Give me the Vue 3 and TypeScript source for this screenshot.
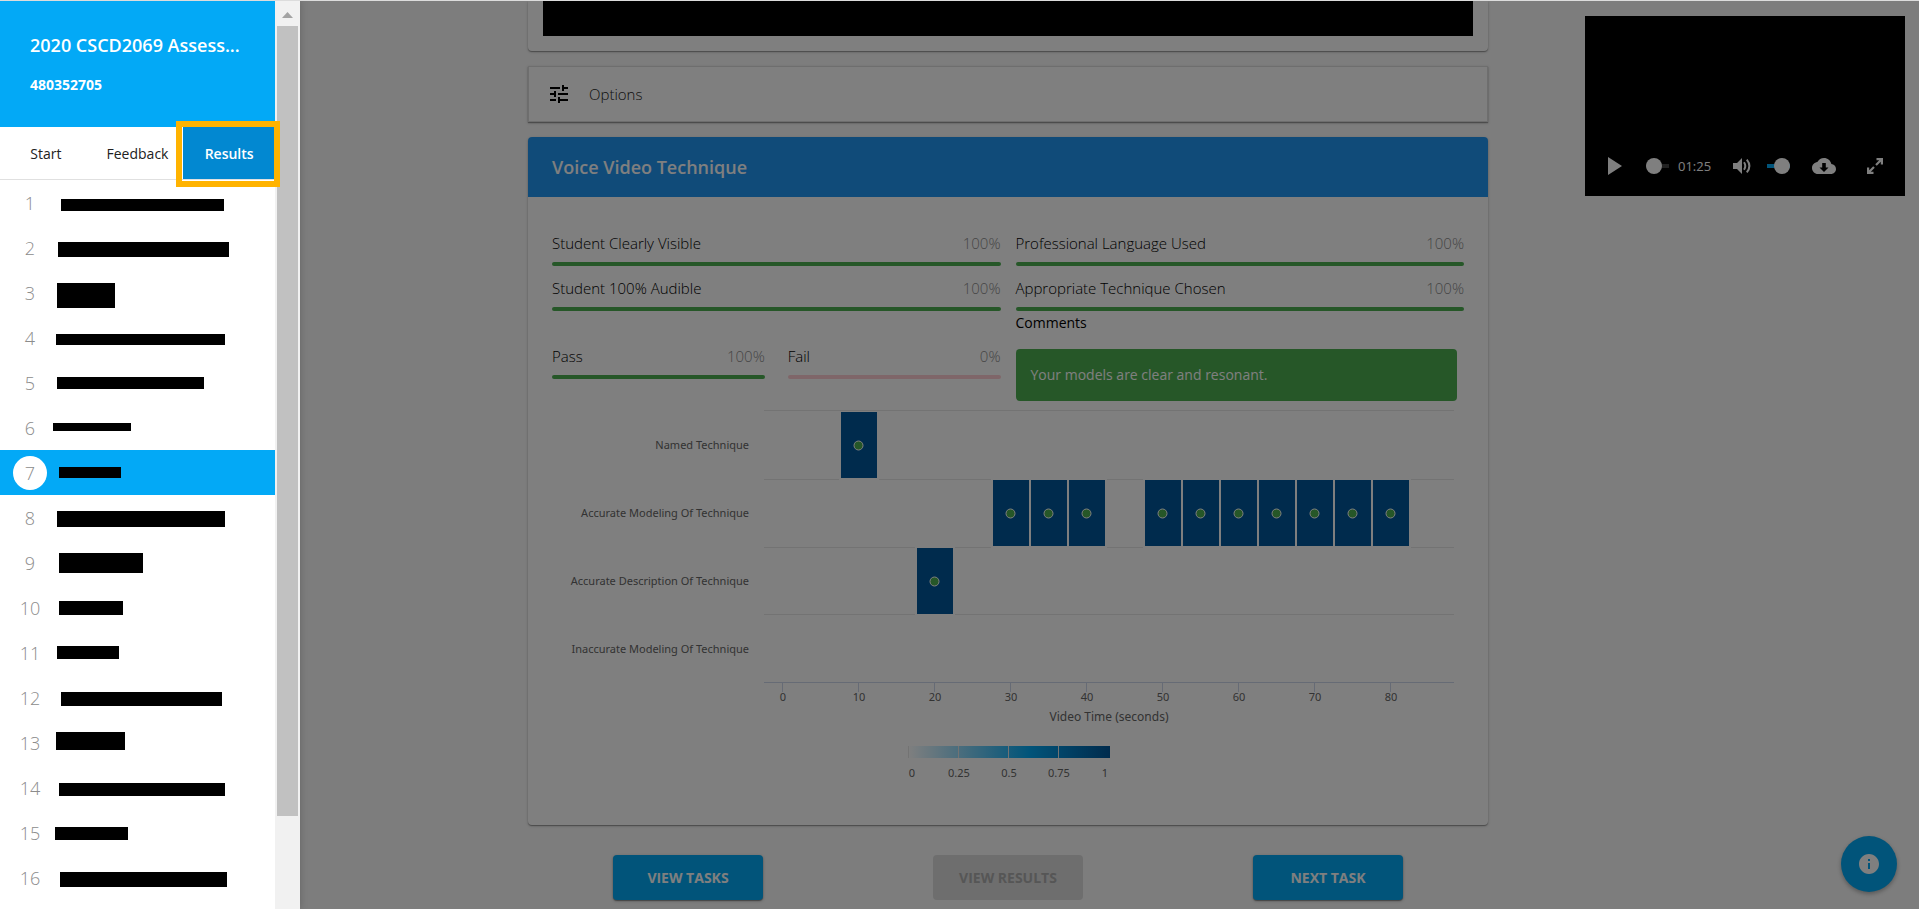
<script setup lang="ts">
import { ref } from 'vue'

interface Student { x: number; y: number; w: number; h: number }
interface Score { label: string; value: number; tone: 'good' | 'bad' }

const tabs = ['Start', 'Feedback', 'Results']
const activeTab = ref('Results')
const activeStudent = ref(6)

// Redaction box of each student name, relative to its list row
const students: Student[] = [
  { x: 61, y: 19, w: 163, h: 12 },
  { x: 58, y: 17, w: 171, h: 15 },
  { x: 57, y: 13, w: 58, h: 25 },
  { x: 56, y: 19, w: 169, h: 11 },
  { x: 57, y: 17, w: 147, h: 12 },
  { x: 53, y: 18, w: 78, h: 8 },
  { x: 59, y: 17, w: 62, h: 11 },
  { x: 57, y: 16, w: 168, h: 16 },
  { x: 59, y: 13, w: 84, h: 20 },
  { x: 59, y: 16, w: 64, h: 14 },
  { x: 57, y: 16, w: 62, h: 13 },
  { x: 61, y: 17, w: 161, h: 14 },
  { x: 56, y: 12, w: 69, h: 18 },
  { x: 59, y: 18, w: 166, h: 13 },
  { x: 55, y: 17, w: 73, h: 13 },
  { x: 60, y: 17, w: 167, h: 15 }
]

const leftScores: Score[] = [
  { label: 'Student Clearly Visible', value: 100, tone: 'good' },
  { label: 'Student 100% Audible', value: 100, tone: 'good' }
]
const rightScores: Score[] = [
  { label: 'Professional Language Used', value: 100, tone: 'good' },
  { label: 'Appropriate Technique Chosen', value: 100, tone: 'good' }
]
const verdicts: Score[] = [
  { label: 'Pass', value: 100, tone: 'good' },
  { label: 'Fail', value: 0, tone: 'bad' }
]

const categories = [
  { label: 'Named Technique', y: 11, times: [10] },
  { label: 'Accurate Modeling Of Technique', y: 79, times: [30, 35, 40, 50, 55, 60, 65, 70, 75, 80] },
  { label: 'Accurate Description Of Technique', y: 147, times: [20] },
  { label: 'Inaccurate Modeling Of Technique', y: 215, times: [] as number[] }
]
const gridLines = [9, 78, 146, 213]
const ticks = [0, 10, 20, 30, 40, 50, 60, 70, 80]
const timeX = (t: number): number => Math.round(230 + t * 7.6)
const legend = [
  { label: '0', x: 360 },
  { label: '0.25', x: 407 },
  { label: '0.5', x: 457 },
  { label: '0.75', x: 507 },
  { label: '1', x: 553 }
]
</script>

<template>
  <div class="page">
    <div class="content">
      <main class="main">
        <section class="card intro"><div class="intro-block"></div></section>

        <button class="options" type="button">
          <svg viewBox="0 0 24 24" width="24" height="24" aria-hidden="true">
            <path d="M3 17v2h6v-2H3zM3 5v2h10V5H3zm10 16v-2h8v-2h-8v-2h-2v6h2zM7 9v2H3v2h4v2h2V9H7zm14 4v-2H11v2h10zm-6-4h2V7h4V5h-4V3h-2v6z" />
          </svg>
          <span>Options</span>
        </button>

        <section class="card result">
          <h2 class="result-title">Voice Video Technique</h2>
          <div class="result-body">
            <div class="columns">
              <div>
                <div v-for="s in leftScores" :key="s.label" class="score">
                  <div class="score-text"><span>{{ s.label }}</span><span class="percent">{{ s.value }}%</span></div>
                  <div class="bar" :class="s.tone"><div class="fill" :style="{ width: s.value + '%' }"></div></div>
                </div>
                <div class="verdicts">
                  <div v-for="s in verdicts" :key="s.label" class="score">
                    <div class="score-text"><span>{{ s.label }}</span><span class="percent">{{ s.value }}%</span></div>
                    <div class="bar" :class="s.tone"><div class="fill" :style="{ width: s.value + '%' }"></div></div>
                  </div>
                </div>
              </div>
              <div>
                <div v-for="s in rightScores" :key="s.label" class="score">
                  <div class="score-text"><span>{{ s.label }}</span><span class="percent">{{ s.value }}%</span></div>
                  <div class="bar" :class="s.tone"><div class="fill" :style="{ width: s.value + '%' }"></div></div>
                </div>
                <h3 class="comments-title">Comments</h3>
                <p class="comment">Your models are clear and resonant.</p>
              </div>
            </div>

            <svg class="chart" viewBox="0 0 912 400" role="img" aria-label="Technique over video time">
              <defs>
                <linearGradient id="scale">
                  <stop offset="0" stop-color="#ffffff" />
                  <stop offset="0.6" stop-color="#03a9f4" />
                  <stop offset="1" stop-color="#01579b" />
                </linearGradient>
              </defs>
              <rect v-for="y in gridLines" :key="y" x="212" :y="y" width="690" height="1" fill="#e6e6e6" />
              <g v-for="c in categories" :key="c.label">
                <text class="label" x="197" :y="c.y + 37" text-anchor="end">{{ c.label }}</text>
                <template v-for="t in c.times" :key="t">
                  <rect :x="timeX(t) - 19" :y="c.y - 1" width="40" height="69" fill="#fff" />
                  <rect :x="timeX(t) - 17" :y="c.y" width="36" height="66" fill="#01579b" />
                  <circle :cx="timeX(t) + 0.5" :cy="c.y + 33.5" r="4.5" fill="#4caf50" stroke="#fff" />
                </template>
              </g>
              <rect x="212" y="281" width="690" height="1" fill="#ccd6eb" />
              <g v-for="t in ticks" :key="t">
                <rect :x="timeX(t)" y="282" width="1" height="9" fill="#ccd6eb" />
                <text class="label" :x="timeX(t) + 1" y="300" text-anchor="middle">{{ t }}</text>
              </g>
              <text class="axis-title" x="557" y="320" text-anchor="middle">Video Time (seconds)</text>
              <rect x="356" y="345" width="202" height="12" fill="url(#scale)" />
              <rect v-for="x in [356, 406, 456, 506]" :key="x" :x="x" y="345" width="1" height="12" fill="#e6e6e6" />
              <text v-for="l in legend" :key="l.label" class="label" :x="l.x" y="376" text-anchor="middle">{{ l.label }}</text>
            </svg>
          </div>
        </section>

        <div class="actions">
          <button type="button" class="action">VIEW TASKS</button>
          <button type="button" class="action" disabled>VIEW RESULTS</button>
          <button type="button" class="action">NEXT TASK</button>
        </div>
      </main>

      <aside class="video">
        <div class="controls">
          <button type="button" aria-label="Play">
            <svg viewBox="0 0 24 24"><path d="M5 3v18l14-9z" /></svg>
          </button>
          <input class="seek" type="range" min="0" max="100" value="0" aria-label="Position" />
          <span class="time">01:25</span>
          <button type="button" aria-label="Mute">
            <svg viewBox="0 0 24 24">
              <path d="M3 9v6h4l5 5V4L7 9z" />
              <path d="M14 8.2q2.600 3.800 0 7.600M16.800 5.600q5.200 6.400 0 12.800" fill="none" stroke="currentColor" stroke-width="2" />
            </svg>
          </button>
          <input class="volume" type="range" min="0" max="100" value="100" aria-label="Volume" />
          <button type="button" aria-label="Download">
            <svg viewBox="0 0 24 24"><path d="M19.350 10.040C18.670 6.590 15.640 4 12 4 9.110 4 6.600 5.640 5.350 8.040 2.340 8.360 0 10.910 0 14c0 3.310 2.690 6 6 6h13c2.760 0 5-2.240 5-5 0-2.640-2.050-4.780-4.650-4.960zM16.500 13.500L12 18l-4.500-4.500h2.700V9h3.600v4.500z" /></svg>
          </button>
          <button type="button" aria-label="Full screen">
            <svg viewBox="0 0 24 24" fill="none" stroke="currentColor" stroke-width="2.200"><path d="M13.500 5.100H18.900V10.500M18.500 5.500L13 11M10.500 18.900H5.100V13.500M5.500 18.500L11 13" fill="none" /></svg>
          </button>
        </div>
      </aside>
    </div>

    <button class="fab" type="button" aria-label="Information">
      <svg viewBox="0 0 24 24" width="24" height="24"><path d="M12 2C6.480 2 2 6.480 2 12s4.480 10 10 10 10-4.480 10-10S17.520 2 12 2zm1 15h-2v-6h2v6zm0-8h-2V7h2v2z" /></svg>
    </button>

    <div class="backdrop"></div>

    <nav class="drawer">
      <div class="drawer-main">
        <header class="drawer-head">
          <h1>2020 CSCD2069 Assess...</h1>
          <p>480352705</p>
        </header>
        <div class="tabs">
          <button v-for="t in tabs" :key="t" type="button" class="tab" :class="{ active: t === activeTab }" @click="activeTab = t">{{ t }}</button>
        </div>
        <ol class="students">
          <li v-for="(s, i) in students" :key="i" :class="{ active: i === activeStudent }" @click="activeStudent = i">
            <span class="number">{{ i + 1 }}</span>
            <span class="redaction" :style="{ left: s.x + 'px', top: s.y + 'px', width: s.w + 'px', height: s.h + 'px' }"></span>
          </li>
        </ol>
      </div>
      <div class="scrollbar">
        <svg viewBox="0 0 25 25" width="25" height="25"><path d="M7 17l5.500-6 5.500 6z" fill="#a3a3a3" /></svg>
        <div class="thumb"></div>
      </div>
    </nav>
  </div>
</template>

<style>
body {
  margin: 0;
}
</style>

<style scoped>
* {
  box-sizing: border-box;
}
.page {
  position: relative;
  height: 100vh;
  overflow: hidden;
  background: #fafafa;
  border-top: 1px solid #dcdcdc;
  font-family: "Open Sans", "Noto Sans", sans-serif;
  font-size: 14px;
  line-height: 24px;
  color: #212121;
}
h1, h2, h3, p, ol {
  margin: 0;
  padding: 0;
}
button {
  border: 0;
  padding: 0;
  font: inherit;
  color: inherit;
  background: none;
  cursor: pointer;
}
.content {
  display: grid;
  grid-template-columns: 1fr minmax(0, 960px) 1fr;
  padding-left: 97px;
}
.main {
  grid-column: 2;
}
.card {
  background: #fff;
  border-radius: 4px;
  box-shadow: 0 1px 3px rgba(0, 0, 0, 0.2), 0 1px 1px rgba(0, 0, 0, 0.3);
}
.intro {
  padding: 0 15px 15px;
  border-radius: 0 0 4px 4px;
}
.intro-block {
  height: 35px;
  background: #000;
}
.options {
  display: flex;
  align-items: center;
  gap: 18px;
  width: 100%;
  height: 56px;
  margin: 15px 0;
  padding: 0 18px;
  font-size: 15px;
  font-weight: 300;
  background: #fff;
  border: 1px solid #dcdcdc;
  box-shadow: 0 1px 3px rgba(0, 0, 0, 0.2), 0 1px 1px rgba(0, 0, 0, 0.3);
}
.result-title {
  padding: 0 24px;
  font-size: 18px;
  font-weight: 600;
  line-height: 60px;
  color: #fff;
  background: #2196f3;
  border-radius: 4px 4px 0 0;
}
.result-body {
  padding: 24px;
}
.columns {
  display: grid;
  grid-template-columns: 1fr 1fr;
  gap: 15px;
}
.score {
  padding-top: 10px;
}
.score-text {
  display: flex;
  justify-content: space-between;
  margin-bottom: 7px;
  font-size: 15px;
  font-weight: 300;
  color: #000;
}
.score-text .percent {
  color: #8c8c8c;
}
.bar {
  height: 4px;
  border-radius: 2px;
  overflow: hidden;
}
.bar.good {
  background: #c8e6c9;
}
.bar.bad {
  background: #ffcdd2;
}
.fill {
  height: 100%;
  background: #4caf50;
}
.verdicts {
  display: grid;
  grid-template-columns: 1fr 1fr;
  gap: 23px;
  margin-top: 23px;
}
.comments-title {
  font-size: 14px;
  font-weight: 400;
  color: #000;
}
.comment {
  margin: 14px 7px 0 0;
  padding: 14px 15px;
  color: #fff;
  background: #4caf50;
  border-radius: 4px;
}
.chart {
  display: block;
  width: 100%;
}
.label {
  font-family: "Noto Sans", sans-serif;
  font-size: 11px;
  fill: #666;
}
.axis-title {
  font-family: "Noto Sans", sans-serif;
  font-size: 12px;
  fill: #666;
}
.actions {
  display: grid;
  grid-template-columns: repeat(3, 1fr);
  justify-items: center;
  padding-top: 30px;
}
.action {
  width: 150px;
  height: 45px;
  font-weight: 700;
  color: #fff;
  background: #03a9f4;
  border-radius: 4px;
  box-shadow: 0 1px 3px rgba(0, 0, 0, 0.3), 0 1px 1px rgba(0, 0, 0, 0.3);
}
.action:disabled {
  color: #acacac;
  background: #dcdcdc;
  box-shadow: none;
}
.video {
  display: flex;
  flex-direction: column;
  justify-content: flex-end;
  justify-self: end;
  width: 320px;
  height: 180px;
  margin: 15px 14px 0 0;
  color: #fff;
  background: #000;
}
.controls {
  display: grid;
  grid-template-columns: 43px 32px 52px 37px 45px 51px 24px;
  align-items: center;
  height: 60px;
  padding-left: 18px;
}
.controls button {
  width: 24px;
  height: 24px;
}
.controls svg {
  display: block;
  width: 24px;
  height: 24px;
  fill: currentColor;
}
.time {
  font-size: 13px;
}
input[type="range"] {
  appearance: none;
  width: 23px;
  height: 16px;
  margin: 0;
  background: linear-gradient(#424242, #424242) center / 100% 4px no-repeat;
}
input.volume {
  background: linear-gradient(#03a9f4, #03a9f4) center / 100% 4px no-repeat;
}
input[type="range"]::-webkit-slider-thumb {
  appearance: none;
  width: 16px;
  height: 16px;
  border-radius: 50%;
  background: #fff;
}
.fab {
  position: absolute;
  right: 22px;
  bottom: 17px;
  display: grid;
  place-items: center;
  width: 56px;
  height: 56px;
  border-radius: 50%;
  background: #03a9f4;
  box-shadow: 0 2px 4px rgba(0, 0, 0, 0.3);
}
.fab svg {
  fill: #fff;
}
.backdrop {
  position: absolute;
  inset: 0;
  background: rgba(0, 0, 0, 0.5);
}
.drawer {
  position: absolute;
  top: 0;
  bottom: 0;
  left: 0;
  display: flex;
  width: 300px;
  background: #fff;
  box-shadow: 0 0 8px rgba(0, 0, 0, 0.2);
}
.drawer-main {
  flex: 1;
  z-index: 1;
}
.drawer-head {
  height: 126px;
  padding: 32px 30px 0;
  color: #fff;
  background: #03a9f6;
}
.drawer-head h1 {
  font-size: 18px;
  font-weight: 600;
  line-height: 24px;
  white-space: nowrap;
}
.drawer-head p {
  margin-top: 16px;
  font-weight: 700;
}
.tabs {
  display: grid;
  grid-template-columns: repeat(3, 1fr);
  height: 53px;
  border-bottom: 1px solid #e0e0e0;
}
.tab {
  position: relative;
  padding-top: 2px;
}
.tab.active {
  font-weight: 600;
  color: #fff;
  background: #0288d1;
}
.tab.active::after {
  content: "";
  position: absolute;
  inset: -6px -5px -8px -7px;
  border: 6px solid #ffb300;
}
.students {
  list-style: none;
}
.students li {
  position: relative;
  display: flex;
  align-items: center;
  height: 45px;
  padding-left: 13px;
}
.students li.active {
  background: #03a9f6;
}
.number {
  width: 34px;
  font-size: 18px;
  font-weight: 300;
  line-height: 34px;
  text-align: center;
  color: #8c8c8c;
  border-radius: 50%;
}
.active .number {
  background: #fff;
}
.redaction {
  position: absolute;
  background: #000;
}
.scrollbar {
  display: flex;
  flex-direction: column;
  width: 25px;
  background: #f1f1f1;
}
.scrollbar svg {
  flex: none;
}
.thumb {
  height: 87%;
  margin: 0 2px;
  background: #c1c1c1;
}
</style>
